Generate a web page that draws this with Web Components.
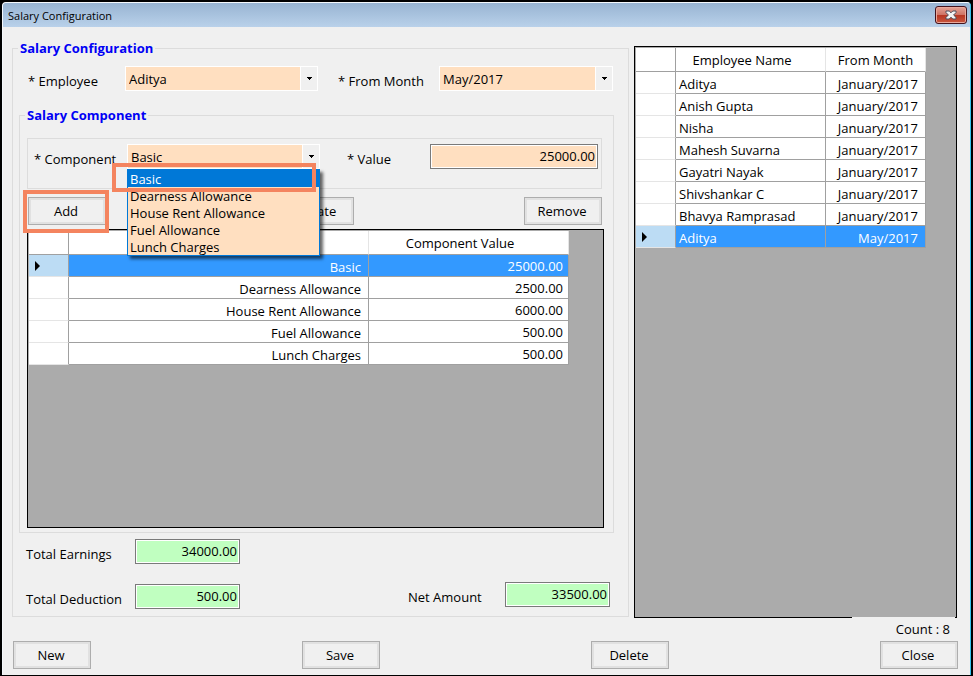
<!DOCTYPE html>
<html lang="en">
<head>
<meta charset="utf-8">
<title>Salary Configuration</title>
<style>
    html, body {
        margin: 0;
        min-height: 100%;
        background: #000;
    }
    body {
        font: 13px/18px "Open Sans", "Noto Sans", sans-serif;
        color: #000;
    }
</style>
</head>
<body>
<salary-window></salary-window>

<template id="window-frame">
    <style>
        :host {
            display: flex;
            flex-direction: column;
            box-sizing: border-box;
            min-height: 100vh;
            padding: 2px 2px 1px;
        }
        .frame {
            flex: 1;
            display: flex;
            flex-direction: column;
            background: #f0f0f0;
            border: 1px solid #f4f8fc;
            border-right-color: #35c4f0;
            border-bottom: 0;
            border-radius: 4px 4px 0 0;
            overflow: hidden;
        }
        header {
            display: flex;
            justify-content: space-between;
            height: 24px;
            padding: 0 3px 0 5px;
            background: linear-gradient(#98b4d2, #b9d1ea);
        }
        h1 {
            margin: 0;
            font-size: 11px;
            line-height: 25px;
            font-weight: normal;
        }
        button {
            display: grid;
            place-items: center;
            width: 32px;
            height: 18px;
            margin-top: 3px;
            padding: 0;
            border: 1px solid #43121c;
            border-radius: 3px;
            box-shadow: inset 0 0 0 1px #e9a99c;
            background: linear-gradient(#e4a396, #cf7466 48%, #b73622 52%, #c9573f);
        }
    </style>
    <div class="frame">
        <header>
            <h1><slot name="title"></slot></h1>
            <button type="button" aria-label="Close window">
                <svg width="12" height="10" viewBox="0 0 12 10">
                    <path d="M1 1h3.200L6 2.800 7.800 1H11v1.600L8.600 5 11 7.400V9H7.800L6 7.200 4.200 9H1V7.400L3.400 5 1 2.600z" fill="#f4f4f4" stroke="#4d4f5c"/>
                </svg>
            </button>
        </header>
        <slot></slot>
    </div>
</template>

<template id="group-box">
    <style>
        :host {
            display: grid;
        }
        fieldset {
            min-width: 0;
            margin: 0;
            padding: 0;
            border: 1px solid #dcdcdc;
        }
        legend {
            margin-left: 5px;
            padding: 0 2px;
            font-weight: bold;
            color: #0000f5;
        }
        .content {
            display: flex;
            flex-direction: column;
            box-sizing: border-box;
            height: 100%;
        }
    </style>
    <fieldset>
        <legend></legend>
        <div class="content"><slot></slot></div>
    </fieldset>
</template>

<template id="text-field">
    <style>
        :host {
            display: grid;
            grid-template-columns: var(--label-width) minmax(0, 1fr);
        }
        label {
            padding-top: 6px;
            white-space: nowrap;
        }
        input {
            box-sizing: border-box;
            width: 100%;
            height: 25px;
            margin: 0;
            padding: 0 2px 2px;
            border: 1px solid #7a7a7a;
            border-radius: 0;
            box-shadow: inset 0 0 0 1px #fff;
            background: var(--field-color, #ffdfc0);
            font: inherit;
            color: inherit;
            text-align: right;
        }
    </style>
    <label for="control"></label>
    <input id="control" type="text">
</template>

<template id="combo-field">
    <style>
        :host {
            display: grid;
            grid-template-columns: var(--label-width) minmax(0, 1fr);
        }
        label {
            padding-top: 6px;
            white-space: nowrap;
        }
        .combo {
            position: relative;
            height: 25px;
        }
        select {
            appearance: none;
            box-sizing: border-box;
            width: 100%;
            height: 25px;
            margin: 0;
            padding: 0 20px 0 3px;
            border: 1px solid #fff;
            border-radius: 0;
            background: #ffdfc0;
            font: inherit;
            color: inherit;
        }
        .arrow {
            position: absolute;
            inset: 1px 1px 1px auto;
            display: grid;
            place-items: center;
            width: 16px;
            border-left: 1px solid #fff;
            background: #f0f0f0;
            pointer-events: none;
        }
        ul {
            position: absolute;
            z-index: 2;
            top: 25px;
            left: 0;
            right: 0;
            margin: 0;
            padding: 0;
            border: 1px solid #0078d7;
            border-top: 0;
            box-shadow: 3px 3px 3px rgba(0, 0, 0, .6);
            background: #ffdfc0;
            list-style: none;
            line-height: 15px;
        }
        li {
            padding: 2px 0 0 2px;
        }
        li[aria-selected="true"] {
            position: relative;
            line-height: 16px;
            background: #0078d7;
            color: #fff;
        }
        /* callout frame round the picked entry */
        li[aria-selected="true"]::after {
            content: "";
            position: absolute;
            inset: -6px 3px -5px -16px;
            border: 4px solid #f4845f;
        }
    </style>
    <label for="control"></label>
    <div class="combo">
        <select id="control"></select>
        <span class="arrow">
            <svg width="5" height="3" viewBox="0 0 5 3" shape-rendering="crispEdges"><path d="M0 0h5v1H4v1H3v1H2V2H1V1H0z"/></svg>
        </span>
    </div>
</template>

<template id="push-button">
    <style>
        :host {
            display: block;
            position: relative;
            width: 78px;
        }
        button {
            display: block;
            box-sizing: border-box;
            width: 100%;
            height: 28px;
            padding: 0 2px 0 0;
            border: 1px solid #adadad;
            border-radius: 0;
            box-shadow: inset 0 0 0 2px #e1e1e1;
            background: #f0f0f0;
            font: inherit;
            color: inherit;
        }
        :host([marked])::after {
            content: "";
            position: absolute;
            z-index: 1;
            inset: -7px -3px -8px -5px;
            border: 4px solid #f4845f;
            pointer-events: none;
        }
    </style>
    <button type="button"><slot></slot></button>
</template>

<template id="data-grid">
    <style>
        :host {
            display: block;
            box-sizing: border-box;
            padding: 1px;
            border: 1px solid #000;
            background: #ababab;
        }
        table {
            border-collapse: separate;
            border-spacing: 0;
            table-layout: fixed;
        }
        th, td {
            box-sizing: border-box;
            height: 22px;
            padding: 2px 7px 0 3px;
            border: solid #a0a0a0;
            border-width: 0 1px 1px 0;
            background: #fff;
            line-height: 18px;
            font-weight: normal;
            text-align: left;
            white-space: nowrap;
            overflow: hidden;
        }
        thead th {
            height: 24px;
            padding: 0 17px 0 0;
            border-right-color: #e5e5e5;
            text-align: center;
        }
        thead th.right {
            padding: 0;
        }
        tbody th {
            padding: 0 6px;
            border-bottom-color: #e5e5e5;
            line-height: 0;
        }
        thead th:first-child {
            border-right-color: #a0a0a0;
        }
        td.right {
            text-align: right;
        }
        td.amount {
            padding: 0 5px 0 4px;
            text-align: right;
        }
        tr.current td {
            background: #39f;
            color: #fff;
        }
        tr.current th {
            background: #bcdcf4;
        }
    </style>
    <table>
        <colgroup></colgroup>
        <thead></thead>
        <tbody></tbody>
    </table>
</template>

<template id="salary-window">
    <style>
        :host {
            display: block;
        }
        main {
            flex: 1;
            display: grid;
            grid-template-columns: minmax(0, 617fr) minmax(0, 323fr);
            grid-template-rows: minmax(0, 1fr);
            gap: 5px;
            padding: 12px 13px 0 9px;
        }
        group-box {
            min-height: 0;
        }
        .header-fields {
            display: grid;
            grid-template-columns: minmax(0, 290fr) minmax(0, 275fr);
            gap: 20px;
            padding: 9px 15px 0;
        }
        .component-box {
            flex: 1;
            margin: 15px 14px 0 6px;
        }
        .header-fields combo-field {
            --label-width: 97px;
        }
        .header-fields combo-field + combo-field {
            --label-width: 101px;
        }
        .entry {
            display: grid;
            grid-template-columns: minmax(0, 286fr) minmax(0, 251fr);
            gap: 27px;
            box-sizing: border-box;
            height: 51px;
            margin: 14px 11px 0 7px;
            padding: 5px 3px 0 6px;
            border: 1px solid #dcdcdc;
        }
        .entry combo-field {
            --label-width: 93px;
        }
        .entry text-field {
            --label-width: 83px;
        }
        .actions {
            display: flex;
            justify-content: space-between;
            margin: 8px 11px 4px 8px;
        }
        .component-box data-grid {
            flex: 1;
            margin: 0 9px 4px 7px;
        }
        .totals {
            display: flex;
            justify-content: space-between;
            align-items: flex-end;
            padding: 6px 18px 7px 13px;
            --field-color: #c0ffc0;
        }
        .totals div {
            display: grid;
            gap: 20px;
        }
        .totals text-field {
            --label-width: 109px;
            width: 214px;
        }
        .totals > text-field {
            --label-width: 97px;
            width: 202px;
            padding-bottom: 2px;
        }
        .employees {
            min-height: 0;
            margin: 7px 0 -1px;
        }
        .count {
            display: flex;
            justify-content: flex-end;
            padding: 0 15px;
        }
        .count output {
            position: relative;
            width: 98px;
            padding: 3px 5px 0 0;
            background: #f0f0f0;
            text-align: right;
        }
        footer {
            display: flex;
            justify-content: space-between;
            padding: 3px 12px 6px 10px;
        }
    </style>
    <window-frame>
        <span slot="title">Salary Configuration</span>
        <main>
            <group-box caption="Salary Configuration">
                <div class="header-fields">
                    <combo-field label="* Employee" options="Aditya"></combo-field>
                    <combo-field label="* From Month" options="May/2017"></combo-field>
                </div>
                <group-box class="component-box" caption="Salary Component">
                    <div class="entry">
                        <combo-field label="* Component" options="Basic,Dearness Allowance,House Rent Allowance,Fuel Allowance,Lunch Charges" open></combo-field>
                        <text-field label="* Value" value="25000.00"></text-field>
                    </div>
                    <div class="actions">
                        <push-button marked>Add</push-button>
                        <push-button>Update</push-button>
                        <push-button>Remove</push-button>
                    </div>
                    <data-grid id="components"></data-grid>
                </group-box>
                <div class="totals">
                    <div>
                        <text-field label="Total Earnings" value="34000.00"></text-field>
                        <text-field label="Total Deduction" value="500.00"></text-field>
                    </div>
                    <text-field label="Net Amount" value="33500.00"></text-field>
                </div>
            </group-box>
            <data-grid id="employees" class="employees"></data-grid>
        </main>
        <div class="count"><output>Count : 8</output></div>
        <footer>
            <push-button>New</push-button>
            <push-button>Save</push-button>
            <push-button>Delete</push-button>
            <push-button>Close</push-button>
        </footer>
    </window-frame>
</template>

<script>
class BaseWidget extends HTMLElement {
    constructor() {
        super();
        this.attachShadow({ mode: 'open' });
        const template = document.getElementById(this.localName);
        this.shadowRoot.appendChild(template.content.cloneNode(true));
    }
}

class WindowFrame extends BaseWidget {}

class PushButton extends BaseWidget {}

class GroupBox extends BaseWidget {
    connectedCallback() {
        this.shadowRoot.querySelector('legend').textContent = this.getAttribute('caption');
    }
}

class TextField extends BaseWidget {
    connectedCallback() {
        this.shadowRoot.querySelector('label').textContent = this.getAttribute('label');
        this.shadowRoot.querySelector('input').value = this.getAttribute('value');
    }
}

class ComboField extends BaseWidget {
    connectedCallback() {
        const options = this.getAttribute('options').split(',');
        this.shadowRoot.querySelector('label').textContent = this.getAttribute('label');
        this.shadowRoot.querySelector('select').innerHTML = options.map(option => `<option>${option}</option>`).join('');
        if (this.hasAttribute('open')) {
            const list = document.createElement('ul');
            list.setAttribute('role', 'listbox');
            list.innerHTML = options.map((option, i) => `<li role="option" aria-selected="${i === 0}">${option}</li>`).join('');
            this.shadowRoot.querySelector('.combo').appendChild(list);
        }
    }
}

class DataGrid extends BaseWidget {
    // columns: [{ title, width, type }], rows: array of cell arrays, current: row index
    setData({ columns, rows, current }) {
        const root = this.shadowRoot;
        const marker = '<svg width="5" height="10" viewBox="0 0 5 10"><path d="M0 0l5 5-5 5z"/></svg>';
        const total = columns.reduce((sum, column) => sum + column.width, 40);
        root.querySelector('table').style.width = `${total}px`;
        root.querySelector('colgroup').innerHTML = '<col style="width: 40px">' +
            columns.map(column => `<col style="width: ${column.width}px">`).join('');
        root.querySelector('thead').innerHTML = `<tr><th></th>${columns.map(column => `<th scope="col" class="${column.type}">${column.title}</th>`).join('')}</tr>`;
        root.querySelector('tbody').innerHTML = rows.map((row, i) => `
            <tr class="${i === current ? 'current' : ''}">
                <th scope="row">${i === current ? marker : ''}</th>
                ${row.map((cell, c) => `<td class="${columns[c].type}">${cell}</td>`).join('')}
            </tr>
        `).join('');
    }
}

class SalaryWindow extends BaseWidget {
    connectedCallback() {
        this.shadowRoot.getElementById('components').setData({
            columns: [
                { title: '', width: 300, type: 'right' },
                { title: 'Component Value', width: 200, type: 'amount' },
            ],
            rows: [
                ['Basic', '25000.00'],
                ['Dearness Allowance', '2500.00'],
                ['House Rent Allowance', '6000.00'],
                ['Fuel Allowance', '500.00'],
                ['Lunch Charges', '500.00'],
            ],
            current: 0,
        });
        this.shadowRoot.getElementById('employees').setData({
            columns: [
                { title: 'Employee Name', width: 150, type: 'left' },
                { title: 'From Month', width: 100, type: 'right' },
            ],
            rows: [
                ['Aditya', 'January/2017'],
                ['Anish Gupta', 'January/2017'],
                ['Nisha', 'January/2017'],
                ['Mahesh Suvarna', 'January/2017'],
                ['Gayatri Nayak', 'January/2017'],
                ['Shivshankar C', 'January/2017'],
                ['Bhavya Ramprasad', 'January/2017'],
                ['Aditya', 'May/2017'],
            ],
            current: 7,
        });
    }
}

customElements.define('window-frame', WindowFrame);
customElements.define('group-box', GroupBox);
customElements.define('text-field', TextField);
customElements.define('combo-field', ComboField);
customElements.define('push-button', PushButton);
customElements.define('data-grid', DataGrid);
customElements.define('salary-window', SalaryWindow);
</script>
</body>
</html>
